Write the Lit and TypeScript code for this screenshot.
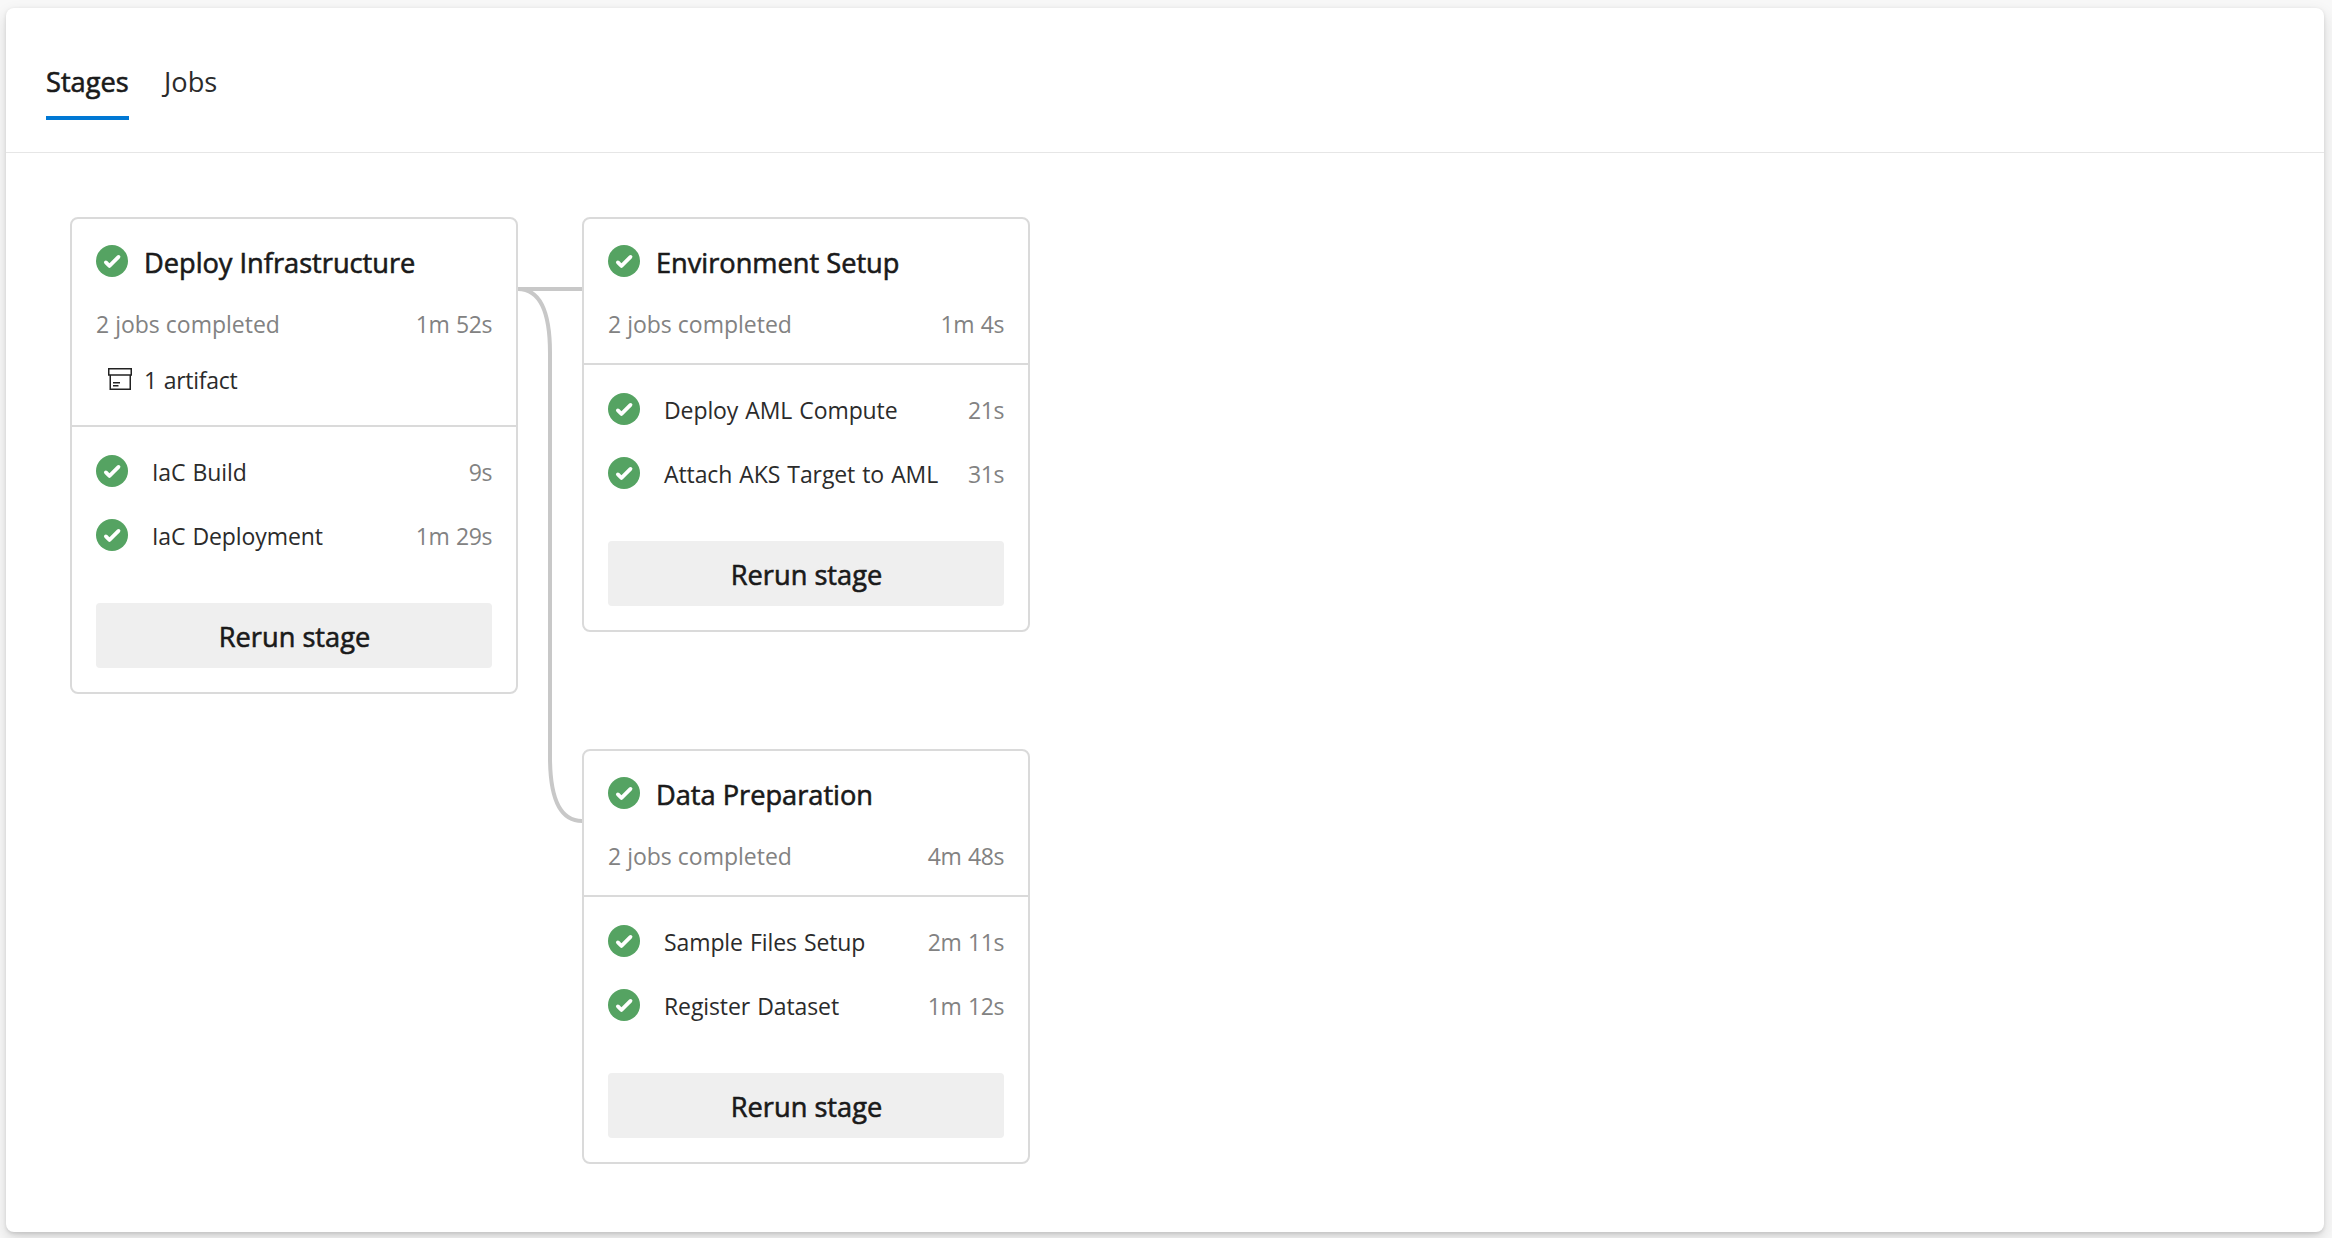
import { LitElement, html, css, svg, nothing } from "lit";
import { customElement, property } from "lit/decorators.js";

interface Job {
  name: string;
  time: string;
}

interface Stage {
  name: string;
  time: string;
  artifacts?: string;
  jobs: Job[];
}

const deployInfrastructure: Stage = {
  name: "Deploy Infrastructure",
  time: "1m 52s",
  artifacts: "1 artifact",
  jobs: [
    { name: "IaC Build", time: "9s" },
    { name: "IaC Deployment", time: "1m 29s" },
  ],
};

const environmentSetup: Stage = {
  name: "Environment Setup",
  time: "1m 4s",
  jobs: [
    { name: "Deploy AML Compute", time: "21s" },
    { name: "Attach AKS Target to AML", time: "31s" },
  ],
};

const dataPreparation: Stage = {
  name: "Data Preparation",
  time: "4m 48s",
  jobs: [
    { name: "Sample Files Setup", time: "2m 11s" },
    { name: "Register Dataset", time: "1m 12s" },
  ],
};

const successIcon = html`<svg class="status" viewBox="0 0 16 16" aria-hidden="true">
  <circle cx="8" cy="8" r="8" fill="#55a362"></circle>
  <path
    fill="#fff"
    d="M6.062 11.144l-.003-.002-1.784-1.785A.937.937 0 1 1 5.6 8.031l1.125 1.124 3.88-3.88A.937.937 0 1 1 11.931 6.6l-4.54 4.54-.004.004a.938.938 0 0 1-1.325 0z"
  ></path>
</svg>`;

const artifactIcon = html`<svg class="box" viewBox="0 0 24 22" aria-hidden="true">
  <g fill="none" stroke="#222" stroke-width="1.5">
    <path d="M.75 .75h22.5v6.2H.75z"></path>
    <path d="M2.25 6.95v14.2h20V6.95"></path>
    <path d="M5 14.75h7M5 17.75h5.5"></path>
  </g>
</svg>`;

@customElement("stage-card")
export class StageCard extends LitElement {
  @property({ attribute: false }) stage!: Stage;

  static styles = css`
    :host {
      display: block;
      box-sizing: border-box;
      width: 448px;
      border: 2px solid #dadada;
      border-radius: 8px;
      background: #fff;
      font-size: 23px;
      line-height: 32px;
      color: #2b2b2b;
    }
    .head {
      padding: 26px 24px 23px;
      border-bottom: 2px solid #dadada;
    }
    .head.with-artifact {
      padding-bottom: 30px;
    }
    .title {
      display: flex;
      align-items: flex-start;
      gap: 16px;
      height: 35px;
      font-size: 27.2px;
      line-height: 35px;
      color: #1a1a1a;
      -webkit-text-stroke: 0.6px #1a1a1a;
    }
    .status {
      flex: none;
      width: 32px;
      height: 32px;
    }
    .summary {
      display: flex;
      justify-content: space-between;
      margin-top: 28px;
      color: #828282;
    }
    .time {
      color: #828282;
      letter-spacing: -0.45px;
      word-spacing: 1.2px;
    }
    .artifact {
      display: flex;
      gap: 12px;
      height: 32px;
      margin-top: 23px;
      padding-left: 12px;
      line-height: 34px;
      letter-spacing: -0.25px;
      word-spacing: 1px;
    }
    .box {
      width: 24px;
      height: 22px;
      margin-top: 5px;
    }
    .body {
      padding: 28px 24px 24px;
    }
    .job {
      display: flex;
      align-items: flex-start;
      height: 64px;
      line-height: 34px;
    }
    .name {
      flex: 1;
      margin-left: 24px;
      white-space: nowrap;
      letter-spacing: -0.1px;
      word-spacing: 1.2px;
    }
    .rerun {
      display: block;
      height: 65px;
      margin-top: 20px;
      padding-left: 1px;
      border-radius: 4px;
      background: #efefef;
      font-size: 27.2px;
      line-height: 67px;
      text-align: center;
      color: #1a1a1a;
      -webkit-text-stroke: 0.6px #1a1a1a;
    }
  `;

  render() {
    const s = this.stage;
    return html`
      <div class="head ${s.artifacts ? "with-artifact" : ""}">
        <div class="title">${successIcon}<span>${s.name}</span></div>
        <div class="summary">
          <span>${s.jobs.length} jobs completed</span>
          <span class="time">${s.time}</span>
        </div>
        ${s.artifacts
          ? html`<div class="artifact">${artifactIcon}<span>${s.artifacts}</span></div>`
          : nothing}
      </div>
      <div class="body">
        ${s.jobs.map(
          (j) => html`<div class="job">
            ${successIcon}<span class="name">${j.name}</span><span class="time">${j.time}</span>
          </div>`
        )}
        <div class="rerun" role="button">Rerun stage</div>
      </div>
    `;
  }
}

@customElement("app-root")
export class AppRoot extends LitElement {
  static styles = css`
    :host {
      display: block;
      box-sizing: border-box;
      height: 1238px;
      padding: 8px 8px 6px 6px;
      overflow: hidden;
      background: #f8f8f8;
      font-family: "Open Sans", "Noto Sans", sans-serif;
    }
    .panel {
      box-sizing: border-box;
      height: 100%;
      border-radius: 8px;
      background: #fff;
      box-shadow: 0 6.4px 14.4px rgba(0, 0, 0, 0.132), 0 1.2px 3.6px rgba(0, 0, 0, 0.108);
    }
    .tabs {
      display: flex;
      align-items: flex-start;
      gap: 35px;
      box-sizing: border-box;
      height: 145px;
      padding: 53px 40px 0;
      border-bottom: 1px solid #e6e6e6;
      font-size: 27.2px;
      line-height: 42px;
      color: #2b2b2b;
    }
    .tab {
      box-sizing: border-box;
      height: 59px;
      border-bottom: 4px solid transparent;
    }
    .tab.active {
      width: 83px;
      border-color: #0078d4;
      color: #1a1a1a;
      -webkit-text-stroke: 0.6px #1a1a1a;
    }
    .graph {
      display: grid;
      grid-template-columns: 448px 64px 448px;
      align-items: start;
      padding: 64px;
    }
    .column {
      display: flex;
      flex-direction: column;
      gap: 117px;
    }
    .links {
      display: block;
      width: 64px;
      height: 615px;
    }
  `;

  render() {
    return html`
      <main class="panel">
        <nav class="tabs">
          <div class="tab active">Stages</div>
          <div class="tab">Jobs</div>
        </nav>
        <section class="graph">
          <stage-card .stage=${deployInfrastructure}></stage-card>
          <svg class="links" viewBox="0 0 64 615" aria-hidden="true">
            ${["M0 72H64", "M0 72Q32 72 32 136V540Q32 604 64 604"].map(
              (d) => svg`<path d=${d} fill="none" stroke="#c8c8c8" stroke-width="4"></path>`
            )}
          </svg>
          <div class="column">
            <stage-card .stage=${environmentSetup}></stage-card>
            <stage-card .stage=${dataPreparation}></stage-card>
          </div>
        </section>
      </main>
    `;
  }
}
